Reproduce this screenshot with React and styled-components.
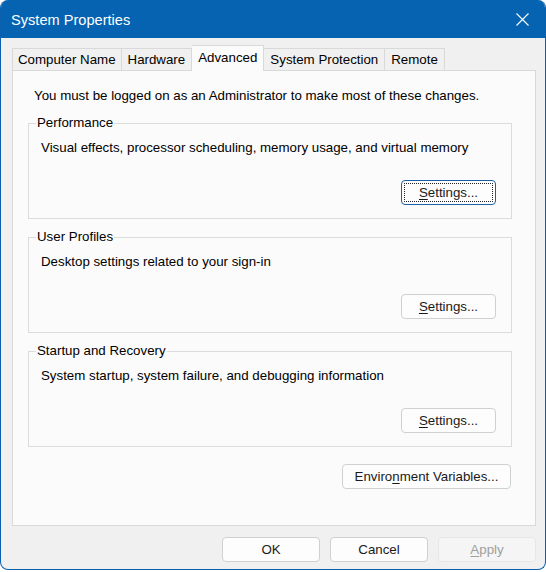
import React from "react";
import styled, { createGlobalStyle } from "styled-components";

const Global = createGlobalStyle`
  html, body { margin: 0; padding: 0; background: #ffffff; }
  body { font-family: "Liberation Sans", Arial, sans-serif; font-size: 13.3px; color: #000; }
`;

const Window = styled.div`
  width: 546px;
  height: 570px;
  box-sizing: border-box;
  border: 1px solid #0a5fae;
  border-top: none;
  border-radius: 8px;
  overflow: hidden;
  background: #f0f0f0;
  display: flex;
  flex-direction: column;
`;

const TitleBar = styled.div`
  height: 38px;
  box-sizing: border-box;
  flex: none;
  background: #0563b2;
  color: #fff;
  display: flex;
  align-items: center;
  justify-content: space-between;
  padding: 1px 16px 0 10px;
  font-size: 14.6px;
`;

const Body = styled.div`
  padding: 7px 9px 0 11px;
  display: flex;
  flex-direction: column;
`;

const TabRow = styled.div`
  display: flex;
  align-items: flex-end;
  height: 25px;
`;

const Tab = styled.div`
  height: ${(p) => (p.$active ? "26px" : "22px")};
  box-sizing: border-box;
  padding: 0 ${(p) => (p.$first ? "5px" : "6px")};
  display: flex;
  align-items: center;
  border: 1px solid #d9d9d9;
  border-bottom: none;
  border-left: ${(p) => (p.$first ? "1px solid #d9d9d9" : "none")};
  background: ${(p) => (p.$active ? "#fbfbfb" : "#f0f0f0")};
  margin-bottom: ${(p) => (p.$active ? "-1px" : "0")};
  position: relative;
  z-index: ${(p) => (p.$active ? 1 : 0)};
  padding-bottom: ${(p) => (p.$active ? "3px" : "0")};
`;

const Panel = styled.div`
  width: 524px;
  height: 456px;
  box-sizing: border-box;
  border: 1px solid #d9d9d9;
  background: #fbfbfb;
  padding: 17px 0 0 15px;
`;

const Intro = styled.div`
  padding-left: 6px;
  line-height: 16px;
  margin-bottom: 11px;
`;

const Group = styled.fieldset`
  width: 484px;
  box-sizing: border-box;
  margin: 0 0 10px 0;
  padding: 9px 15px 13px 12px;
  border: 1px solid #dcdcdc;
  display: flex;
  flex-direction: column;
`;

const Legend = styled.legend`
  padding: 0 1px;
  margin-left: -5px;
  line-height: 16px;
`;

const Desc = styled.div`
  line-height: 16px;
  margin-bottom: 24px;
`;

const Button = styled.button`
  font-family: inherit;
  font-size: 13.3px;
  width: ${(p) => p.$w || "95px"};
  height: 25px;
  box-sizing: border-box;
  background: ${(p) => (p.disabled ? "#f5f5f5" : "#fdfdfd")};
  color: ${(p) => (p.disabled ? "#a0a0a0" : "#1a1a1a")};
  border: 1px solid ${(p) => (p.$focus ? "#1a5fa8" : p.disabled ? "#e6e6e6" : "#d0d0d0")};
  border-radius: 4px;
  padding: 0;
  align-self: ${(p) => p.$align || "auto"};
  outline: ${(p) => (p.$focus ? "1px dotted #202020" : "none")};
  outline-offset: -4px;
`;

const U = styled.span`
  text-decoration: underline;
  text-underline-offset: 2px;
`;

const EnvRow = styled.div`
  display: flex;
  justify-content: flex-end;
  width: 483px;
  padding-top: 7px;
`;

const Footer = styled.div`
  display: flex;
  justify-content: flex-end;
  gap: 10px;
  padding-top: 11px;
`;

const Close = () => (
  <svg width="13" height="13" viewBox="0 0 13 13">
    <path d="M0.5 0.5 L12.5 12.5 M12.5 0.5 L0.5 12.5" stroke="#fff" strokeWidth="1.1" />
  </svg>
);

const groups = [
  { title: "Performance", text: "Visual effects, processor scheduling, memory usage, and virtual memory", focus: true },
  { title: "User Profiles", text: "Desktop settings related to your sign-in" },
  { title: "Startup and Recovery", text: "System startup, system failure, and debugging information" },
];

const tabs = ["Computer Name", "Hardware", "Advanced", "System Protection", "Remote"];

export default function App() {
  return (
    <>
      <Global />
      <Window>
        <TitleBar>
          <span>System Properties</span>
          <Close />
        </TitleBar>
        <Body>
          <TabRow>
            {tabs.map((t, i) => (
              <Tab key={t} $first={i === 0} $active={t === "Advanced"}>
                {t}
              </Tab>
            ))}
          </TabRow>
          <Panel>
            <Intro>You must be logged on as an Administrator to make most of these changes.</Intro>
            {groups.map((g) => (
              <Group key={g.title}>
                <Legend>{g.title}</Legend>
                <Desc>{g.text}</Desc>
                <Button $align="flex-end" $focus={g.focus}>
                  <U>S</U>ettings...
                </Button>
              </Group>
            ))}
            <EnvRow>
              <Button $w="169px">
                Enviro<U>n</U>ment Variables...
              </Button>
            </EnvRow>
          </Panel>
          <Footer>
            <Button $w="98px">OK</Button>
            <Button $w="98px">Cancel</Button>
            <Button $w="98px" disabled>
              <U>A</U>pply
            </Button>
          </Footer>
        </Body>
      </Window>
    </>
  );
}
